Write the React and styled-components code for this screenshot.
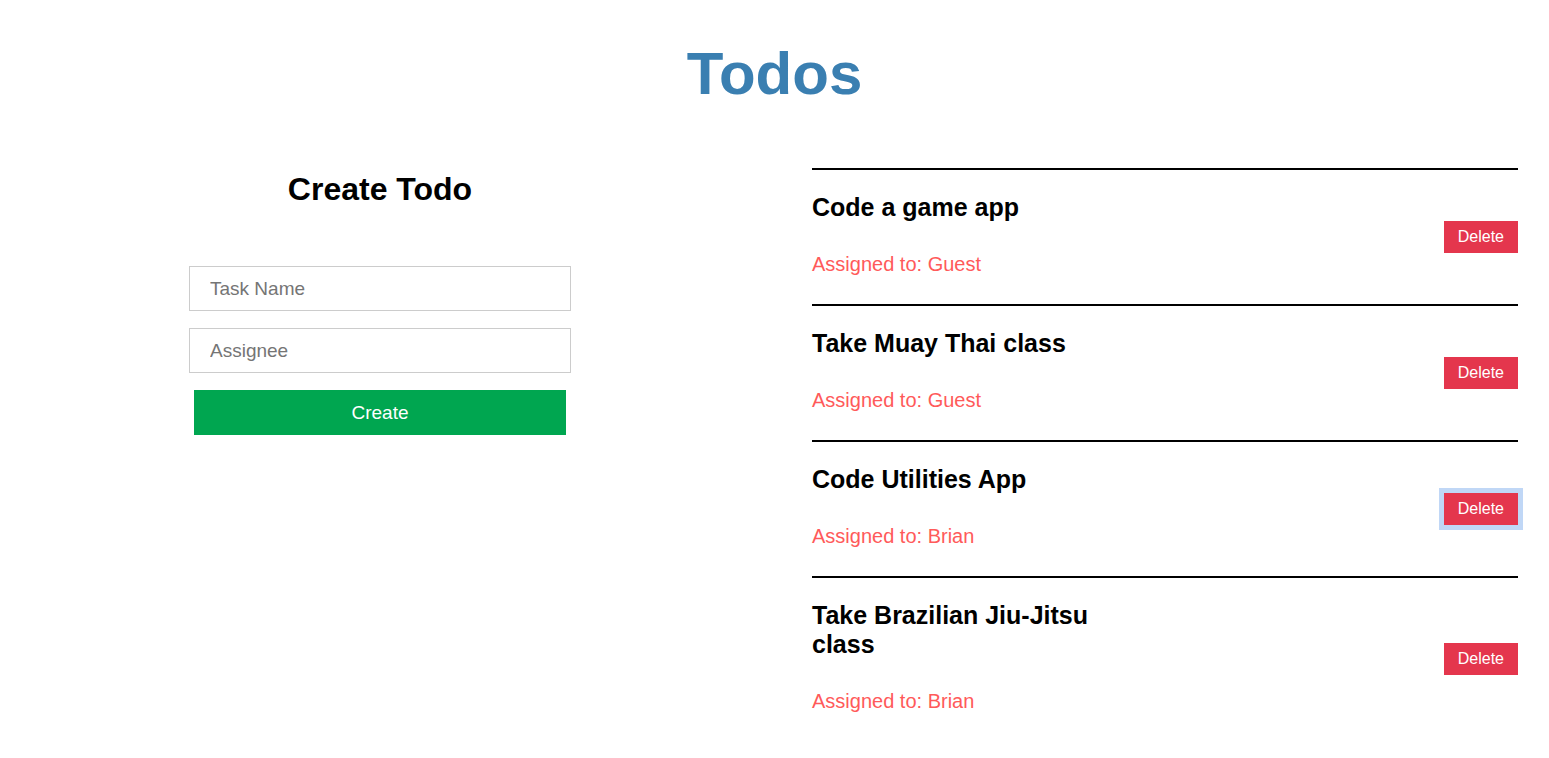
import React from 'react';
import styled, { createGlobalStyle } from 'styled-components';

const GlobalStyle = createGlobalStyle`
  body {
    margin: 0;
    background: #fff;
    font-family: "Liberation Sans", Arial, sans-serif;
  }
`;

const todos = [
  { id: 1, name: 'Code a game app', assignee: 'Guest' },
  { id: 2, name: 'Take Muay Thai class', assignee: 'Guest' },
  { id: 3, name: 'Code Utilities App', assignee: 'Brian', focused: true },
  { id: 4, name: 'Take Brazilian Jiu-Jitsu class', assignee: 'Brian' },
];

const TodoItem = ({ todo }) => (
  <Item>
    <Info>
      <TaskTitle>{todo.name}</TaskTitle>
      <Assignee>Assigned to: {todo.assignee}</Assignee>
    </Info>
    <DeleteButton focused={todo.focused}>Delete</DeleteButton>
  </Item>
);

const App = () => (
  <Page>
    <GlobalStyle />
    <Title>Todos</Title>
    <Container>
      <FormColumn>
        <FormTitle>Create Todo</FormTitle>
        <Form onSubmit={e => e.preventDefault()}>
          <Input placeholder="Task Name" />
          <Input placeholder="Assignee" />
          <CreateButton type="submit">Create</CreateButton>
        </Form>
      </FormColumn>
      <List>
        {todos.map(todo => <TodoItem key={todo.id} todo={todo} />)}
      </List>
    </Container>
  </Page>
);

export default App;

const Page = styled.div`
  box-sizing: border-box;
  width: 100%;
  padding-top: 39px;
`;

const Title = styled.h1`
  margin: 0;
  text-align: center;
  font-size: 60px;
  font-weight: bold;
  line-height: 69px;
  color: #3a7fb1;
`;

const Container = styled.section`
  display: grid;
  grid-template-columns: 1fr 706px;
  column-gap: 52px;
  padding-right: 31px;
  margin-top: 60px;
`;

const FormColumn = styled.div`
  display: flex;
  flex-direction: column;
  align-items: center;
  padding-top: 3px;
`;

const FormTitle = styled.h2`
  margin: 0;
  font-size: 32px;
  line-height: 37px;
  font-weight: bold;
  color: #000;
`;

const Form = styled.form`
  display: flex;
  flex-direction: column;
  align-items: center;
  gap: 17px;
  margin-top: 58px;
`;

const Input = styled.input`
  box-sizing: border-box;
  width: 382px;
  height: 45px;
  padding: 0 20px;
  border: 1px solid #cccccc;
  font-family: "Liberation Sans", Arial, sans-serif;
  font-size: 19px;
  color: #333;
  outline: none;
  &::placeholder {
    color: #757575;
  }
`;

const CreateButton = styled.button`
  width: 372px;
  height: 45px;
  border: none;
  background: #00a650;
  color: #fff;
  font-family: "Liberation Sans", Arial, sans-serif;
  font-size: 19px;
  cursor: pointer;
`;

const List = styled.ul`
  list-style: none;
  margin: 0;
  padding: 0;
`;

const Item = styled.li`
  display: flex;
  align-items: center;
  justify-content: space-between;
  border-top: 2px solid #000;
  padding: 23px 0 28px;
`;

const Info = styled.div`
  max-width: 310px;
`;

const TaskTitle = styled.h3`
  margin: 0;
  font-size: 25px;
  line-height: 29px;
  font-weight: bold;
  color: #000;
`;

const Assignee = styled.p`
  margin: 31px 0 0;
  font-size: 20px;
  line-height: 23px;
  color: #ff5a5a;
`;

const DeleteButton = styled.button`
  height: 32px;
  margin-top: 4px;
  padding: 0 14px;
  border: none;
  background: #e4364d;
  color: #fff;
  font-family: "Liberation Sans", Arial, sans-serif;
  font-size: 16px;
  cursor: pointer;
  outline: ${p => (p.focused ? '5px solid #c0d7f6' : 'none')};
`;
